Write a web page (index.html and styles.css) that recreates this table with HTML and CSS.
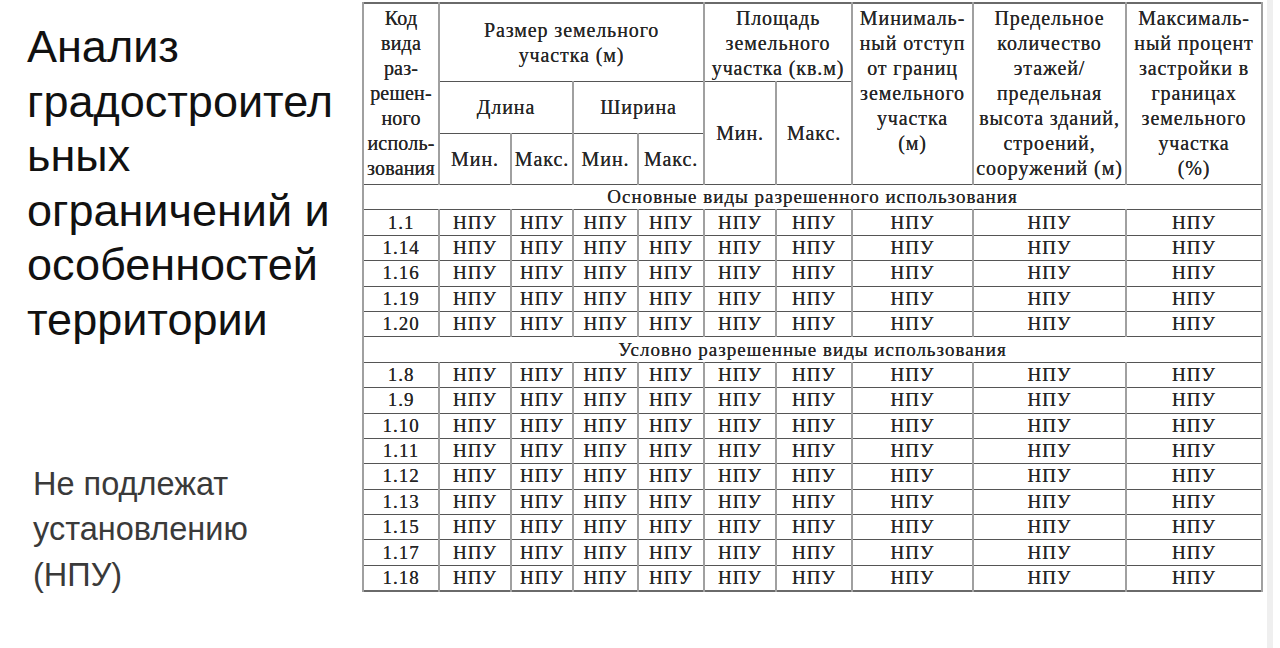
FILE: index.html
```html
<!DOCTYPE html>
<html lang="ru">
<head>
<meta charset="utf-8">
<link rel="stylesheet" href="styles.css">
</head>
<body>
<div class="page">
  <div class="side">
    <h1 class="title">Анализ градостроител ьных ограничений и особенностей территории</h1>
    <p class="note">Не подлежат установлению (НПУ)</p>
  </div>
  <table class="grid">
    <colgroup>
      <col class="c1"><col class="c2"><col class="c3"><col class="c4"><col class="c5">
      <col class="c6"><col class="c7"><col class="c8"><col class="c9"><col class="c10">
    </colgroup>
    <thead>
      <tr class="h1">
        <th rowspan="3" class="top code">Код<br>вида<br>раз-<br>решен-<br>ного<br>исполь-<br>зования</th>
        <th colspan="4">Размер земельного<br>участка (м)</th>
        <th colspan="2" class="top">Площадь<br>земельного<br>участка (кв.м)</th>
        <th rowspan="3" class="top">Минималь-<br>ный отступ<br>от границ<br>земельного<br>участка<br>(м)</th>
        <th rowspan="3" class="top">Предельное<br>количество<br>этажей/<br>предельная<br>высота зданий,<br>строений,<br>сооружений (м)</th>
        <th rowspan="3" class="top">Максималь-<br>ный процент<br>застройки в<br>границах<br>земельного<br>участка<br>(%)</th>
      </tr>
      <tr class="h2">
        <th colspan="2">Длина</th>
        <th colspan="2">Ширина</th>
        <th rowspan="2">Мин.</th>
        <th rowspan="2">Макс.</th>
      </tr>
      <tr class="h3">
        <th>Мин.</th><th>Макс.</th><th>Мин.</th><th>Макс.</th>
      </tr>
    </thead>
    <tbody>
      <tr class="sec"><td colspan="10">Основные виды разрешенного использования</td></tr>
      <tr><td>1.1</td><td>НПУ</td><td>НПУ</td><td>НПУ</td><td>НПУ</td><td>НПУ</td><td>НПУ</td><td>НПУ</td><td>НПУ</td><td>НПУ</td></tr>
      <tr><td>1.14</td><td>НПУ</td><td>НПУ</td><td>НПУ</td><td>НПУ</td><td>НПУ</td><td>НПУ</td><td>НПУ</td><td>НПУ</td><td>НПУ</td></tr>
      <tr><td>1.16</td><td>НПУ</td><td>НПУ</td><td>НПУ</td><td>НПУ</td><td>НПУ</td><td>НПУ</td><td>НПУ</td><td>НПУ</td><td>НПУ</td></tr>
      <tr><td>1.19</td><td>НПУ</td><td>НПУ</td><td>НПУ</td><td>НПУ</td><td>НПУ</td><td>НПУ</td><td>НПУ</td><td>НПУ</td><td>НПУ</td></tr>
      <tr><td>1.20</td><td>НПУ</td><td>НПУ</td><td>НПУ</td><td>НПУ</td><td>НПУ</td><td>НПУ</td><td>НПУ</td><td>НПУ</td><td>НПУ</td></tr>
      <tr class="sec"><td colspan="10">Условно разрешенные виды использования</td></tr>
      <tr><td>1.8</td><td>НПУ</td><td>НПУ</td><td>НПУ</td><td>НПУ</td><td>НПУ</td><td>НПУ</td><td>НПУ</td><td>НПУ</td><td>НПУ</td></tr>
      <tr><td>1.9</td><td>НПУ</td><td>НПУ</td><td>НПУ</td><td>НПУ</td><td>НПУ</td><td>НПУ</td><td>НПУ</td><td>НПУ</td><td>НПУ</td></tr>
      <tr><td>1.10</td><td>НПУ</td><td>НПУ</td><td>НПУ</td><td>НПУ</td><td>НПУ</td><td>НПУ</td><td>НПУ</td><td>НПУ</td><td>НПУ</td></tr>
      <tr><td>1.11</td><td>НПУ</td><td>НПУ</td><td>НПУ</td><td>НПУ</td><td>НПУ</td><td>НПУ</td><td>НПУ</td><td>НПУ</td><td>НПУ</td></tr>
      <tr><td>1.12</td><td>НПУ</td><td>НПУ</td><td>НПУ</td><td>НПУ</td><td>НПУ</td><td>НПУ</td><td>НПУ</td><td>НПУ</td><td>НПУ</td></tr>
      <tr><td>1.13</td><td>НПУ</td><td>НПУ</td><td>НПУ</td><td>НПУ</td><td>НПУ</td><td>НПУ</td><td>НПУ</td><td>НПУ</td><td>НПУ</td></tr>
      <tr><td>1.15</td><td>НПУ</td><td>НПУ</td><td>НПУ</td><td>НПУ</td><td>НПУ</td><td>НПУ</td><td>НПУ</td><td>НПУ</td><td>НПУ</td></tr>
      <tr><td>1.17</td><td>НПУ</td><td>НПУ</td><td>НПУ</td><td>НПУ</td><td>НПУ</td><td>НПУ</td><td>НПУ</td><td>НПУ</td><td>НПУ</td></tr>
      <tr><td>1.18</td><td>НПУ</td><td>НПУ</td><td>НПУ</td><td>НПУ</td><td>НПУ</td><td>НПУ</td><td>НПУ</td><td>НПУ</td><td>НПУ</td></tr>
    </tbody>
  </table>
  <div class="edge"></div>
</div>
</body>
</html>
```

FILE: styles.css
```css
html, body {
  margin: 0;
  padding: 0;
  background: #ffffff;
}

.page {
  display: flex;
  align-items: flex-start;
  width: 1280px;
  height: 648px;
  overflow: hidden;
  padding-top: 2px;
  box-sizing: border-box;
}

.side {
  width: 362px;
  padding-left: 27px;
  box-sizing: border-box;
  flex: none;
}

.title {
  margin: 18px 0 0 0;
  font-family: "Liberation Sans", Arial, sans-serif;
  font-weight: normal;
  font-size: 45px;
  line-height: 54.6px;
  color: #111111;
  width: 330px;
}

.note {
  margin: 114px 0 0 6px;
  width: 260px;
  font-family: "Liberation Sans", Arial, sans-serif;
  font-size: 32.5px;
  line-height: 45.5px;
  color: #3a3a3a;
}

.edge {
  flex: none;
  width: 6px;
  height: 648px;
  margin-left: 4px;
  margin-top: -2px;
  background: #efefef;
}

.grid {
  flex: none;
  border-collapse: collapse;
  table-layout: fixed;
  width: 899px;
  font-family: "Liberation Serif", "Times New Roman", serif;
  font-size: 20px;
  letter-spacing: 0.9px;
  color: #262626;
  text-shadow: 0 0 0.6px #333333;
  border: 2px solid #6a6a6a;
}

.c1 { width: 76px; }
.c2 { width: 72px; }
.c3 { width: 62px; }
.c4 { width: 65px; }
.c5 { width: 66px; }
.c6 { width: 72px; }
.c7 { width: 76px; }
.c8 { width: 121px; }
.c9 { width: 153px; }
.c10 { width: 136px; }

.grid th,
.grid td {
  border-top: 1.5px solid #555555;
  border-bottom: 1.5px solid #555555;
  border-left: 2px solid #a0a0a0;
  border-right: 2px solid #a0a0a0;
  padding: 0;
  text-align: center;
  font-weight: normal;
  line-height: 25px;
  white-space: nowrap;
  overflow: hidden;
}

.grid th {
  vertical-align: middle;
}

.grid th.top {
  vertical-align: top;
  padding-top: 2px;
}

.grid th.code {
  font-size: 20px;
  letter-spacing: 0.2px;
}

.h1 { height: 73px; }
.h2 { height: 52px; }
.h3 { height: 51px; }

.grid tbody tr { height: 25.4px; }
.grid tbody td {
  line-height: 22px;
  font-size: 19px;
  letter-spacing: 1px;
}

.grid .sec td {
  text-align: center;
  font-size: 19px;
  letter-spacing: 1px;
}
```
